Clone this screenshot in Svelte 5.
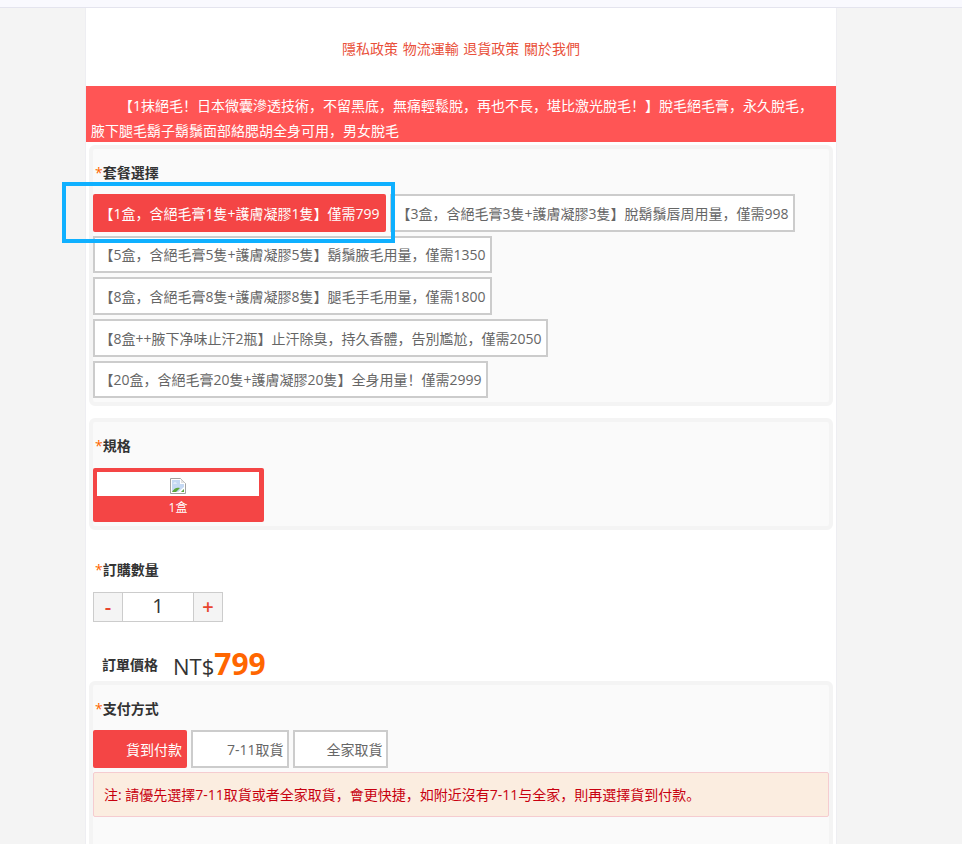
<script>
  const packages = [
    { label: '【1盒，含絕毛膏1隻+護膚凝膠1隻】僅需799', price: 799 },
    { label: '【3盒，含絕毛膏3隻+護膚凝膠3隻】脫鬍鬚唇周用量，僅需998', price: 998 },
    { label: '【5盒，含絕毛膏5隻+護膚凝膠5隻】鬍鬚腋毛用量，僅需1350', price: 1350 },
    { label: '【8盒，含絕毛膏8隻+護膚凝膠8隻】腿毛手毛用量，僅需1800', price: 1800 },
    { label: '【8盒++腋下净味止汗2瓶】止汗除臭，持久香體，告別尷尬，僅需2050', price: 2050 },
    { label: '【20盒，含絕毛膏20隻+護膚凝膠20隻】全身用量！僅需2999', price: 2999 }
  ];
  const payments = ['貨到付款', '7-11取貨', '全家取貨'];

  let selected = $state(0);
  let payment = $state(0);
  let qty = $state(1);
  let total = $derived(packages[selected].price * qty);
</script>

<div class="page">
  <div class="topbar"></div>

  <div class="sheet">
    <nav class="links">隱私政策 物流運輸 退貨政策 關於我們</nav>

    <p class="banner">【1抹絕毛！日本微囊滲透技術，不留黑底，無痛輕鬆脫，再也不長，堪比激光脫毛！】脫毛絕毛膏，永久脫毛，腋下腿毛鬍子鬍鬚面部絡腮胡全身可用，男女脫毛</p>

    <section class="card first">
      <h3><span>*</span>套餐選擇</h3>
      <div class="options">
        {#each packages as item, i}
          <button class="opt" class:active={selected === i} onclick={() => (selected = i)}>{item.label}</button>
        {/each}
      </div>
    </section>

    <section class="card second">
      <h3><span>*</span>規格</h3>
      <div class="spec">
        <div class="thumb">
          <svg width="16" height="16" viewBox="0 0 16 16">
            <path d="M.5.5h10l5 5v10H.5z" fill="#fff" stroke="#a3a3a3"/>
            <path d="M2 2h8v4h4v8H2z" fill="#c5d9f3"/>
            <path d="M3 5.5c1-1.5 3-1.5 4 0z" fill="#fff"/>
            <path d="M2 14c2-4 5-5 8-4l-4 4z" fill="#5ca63c"/>
            <path d="M11 5V1l4 4z" fill="#e4e4e4"/>
            <path d="M8 14l6-5v2l-3 3z" fill="#fff"/>
            <path d="M11 14l3-3v3z" fill="#5ca63c"/>
          </svg>
        </div>
        <div class="spec-name">1盒</div>
      </div>
    </section>

    <section class="qty">
      <h3><span>*</span>訂購數量</h3>
      <div class="stepper">
        <button onclick={() => qty > 1 && qty--}>-</button>
        <div class="count">{qty}</div>
        <button onclick={() => qty++}>+</button>
      </div>
    </section>

    <div class="total">
      <span class="total-label">訂單價格</span>
      <span class="cur">NT$</span><span class="amount">{total}</span>
    </div>

    <section class="card third">
      <h3><span>*</span>支付方式</h3>
      <div class="options">
        {#each payments as name, i}
          <button class="opt pay" class:active={payment === i} onclick={() => (payment = i)}>{name}</button>
        {/each}
      </div>
      <div class="note">注: 請優先選擇7-11取貨或者全家取貨，會更快捷，如附近沒有7-11与全家，則再選擇貨到付款。</div>
    </section>
  </div>

  <div class="highlight"></div>
</div>

<style>
  :global(body) {
    margin: 0;
    background: #f4f4f4;
    font-family: "Open Sans", "Noto Sans CJK SC", "Noto Sans CJK TC", sans-serif;
    font-size: 14px;
    color: #333;
  }

  .page {
    position: relative;
    height: 844px;
    overflow: hidden;
  }

  .topbar {
    height: 7px;
    background: #f9f9fe;
    border-bottom: 1px solid #e4e4ee;
  }

  .sheet {
    width: 750px;
    margin-left: 85px;
    background: #fff;
    border: solid #eeeef2;
    border-width: 0 1px;
  }

  .links {
    height: 78px;
    line-height: 82px;
    text-align: center;
    word-spacing: 1px;
    color: #e9503a;
  }

  .banner {
    margin: 0;
    height: 56px;
    box-sizing: border-box;
    padding: 6.5px 20px 0 5px;
    line-height: 25px;
    text-indent: 28px;
    background: #f55;
    color: #fff;
  }

  .card {
    margin: 3px -1px 0 3px;
    width: 744px;
    box-sizing: border-box;
    border: 4px solid #f4f4f4;
    border-radius: 6px;
    background: #fafafa;
    padding-bottom: 4px;
  }

  .card.second {
    margin-top: 12px;
  }

  .card.second h3 {
    padding-bottom: 12px;
  }

  .card.third {
    margin-top: 0;
    height: 200px;
  }

  h3 {
    margin: 0;
    padding: 14px 0 11px 2px;
    font-size: 14px;
    line-height: 20px;
    font-weight: 700;
    color: #333;
  }

  h3 span {
    color: #f60;
    font-weight: 400;
  }

  .options {
    display: flex;
    flex-wrap: wrap;
    gap: 4px;
  }

  button {
    font: inherit;
    cursor: pointer;
  }

  .opt {
    height: 37.67px;
    box-sizing: border-box;
    padding: 0 4.5px;
    border: 2px solid #ccc;
    border-radius: 0;
    background: #fff;
    color: #666;
    white-space: nowrap;
  }

  .opt.pay {
    padding: 0 3px 0 32px;
  }

  .opt.pay:nth-child(1) {
    padding-left: 31px;
  }

  .opt.pay:nth-child(2) {
    padding-left: 34px;
  }

  .opt.active {
    border-color: #f44545;
    border-radius: 2px;
    background: #f44545;
    color: #fff;
  }

  .spec {
    width: 171px;
    height: 54px;
    box-sizing: border-box;
    padding: 4px 5px 0 4px;
    border-radius: 2px;
    background: #f44545;
    color: #fff;
    text-align: center;
    font-size: 12px;
  }

  .thumb {
    height: 24px;
    background: #fff;
    display: flex;
    justify-content: center;
    padding-top: 6px;
    box-sizing: border-box;
  }

  .spec-name {
    line-height: 24px;
  }

  .qty {
    margin: 16px 0 0 7px;
  }

  .qty h3 {
    padding-top: 14px;
    padding-bottom: 12px;
  }

  .stepper {
    display: flex;
    width: 130px;
    height: 30px;
    box-sizing: border-box;
    border: 1px solid #ccc;
  }

  .stepper button {
    width: 28px;
    padding: 0;
    border: 0;
    background: #f4f4f4;
    color: #e8452e;
    font-size: 20px;
    font-weight: 600;
    line-height: 28px;
  }

  .count {
    flex: 1;
    background: #fff;
    border: solid #ccc;
    border-width: 0 1px;
    text-align: center;
    font-size: 20px;
    line-height: 26px;
    color: #333;
  }

  .total {
    display: flex;
    align-items: baseline;
    height: 39px;
    margin-top: 20px;
    padding: 5px 0 0 16px;
    box-sizing: border-box;
  }

  .total-label {
    align-self: flex-start;
    width: 71px;
    margin-top: 8px;
    line-height: 20px;
    font-weight: 700;
  }

  .cur {
    font-size: 22px;
    line-height: 34px;
  }

  .amount {
    font-size: 30px;
    line-height: 34px;
    font-weight: 700;
    color: #f60;
  }

  .note {
    margin-top: 4px;
    height: 45px;
    box-sizing: border-box;
    padding: 0 10px;
    line-height: 43px;
    border: 1px solid #f5ccd0;
    border-radius: 2px;
    background: #fbede0;
    color: #c8000f;
  }

  /* annotation box drawn over the first package */
  .highlight {
    position: absolute;
    left: 62px;
    top: 182px;
    width: 333px;
    height: 61px;
    box-sizing: border-box;
    border: 4px solid #0fb0ff;
    pointer-events: none;
  }
</style>
